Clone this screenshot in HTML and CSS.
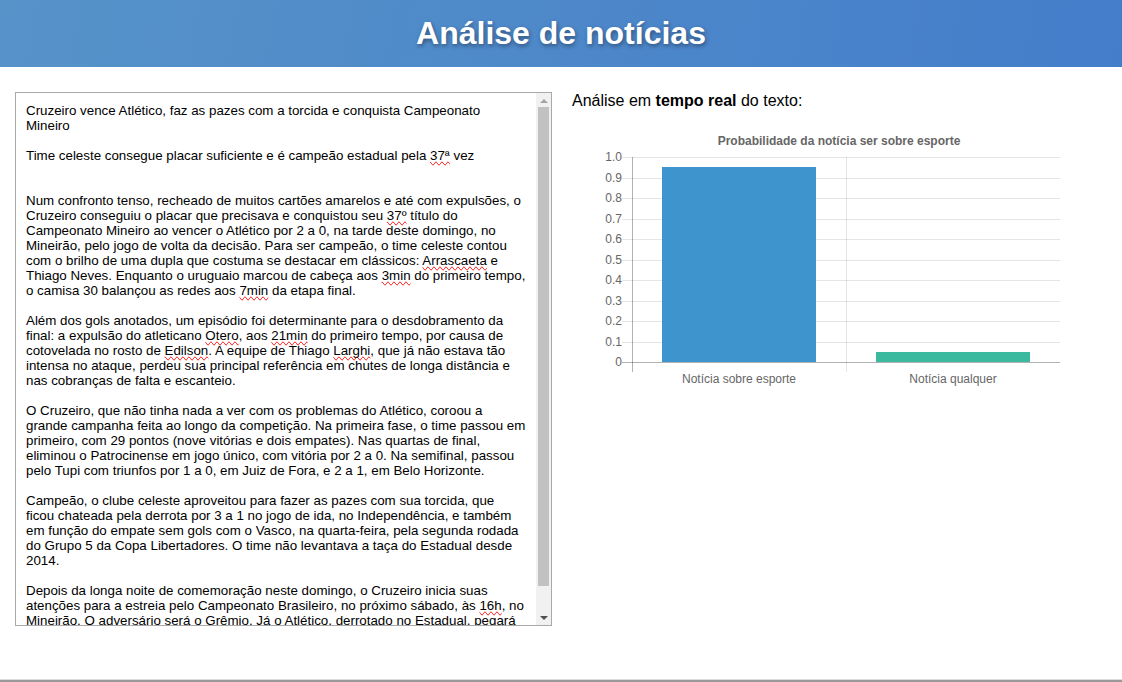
FILE: index.html
```html
<!DOCTYPE html>
<html lang="pt-BR">
<head>
<meta charset="utf-8">
<meta name="viewport" content="width=device-width, initial-scale=1">
<title>Análise de notícias</title>
<link rel="stylesheet" href="styles.css">
</head>
<body>
<header class="header"><h1 class="title">Análise de notícias</h1></header>
<main class="main">
  <div class="editor">
    <div class="field">
      <div class="marks" id="marks" aria-hidden="true"></div>
      <textarea class="text" id="news" aria-label="Texto da notícia" spellcheck="false">Cruzeiro vence Atlético, faz as pazes com a torcida e conquista Campeonato Mineiro

Time celeste consegue placar suficiente e é campeão estadual pela 37ª vez


Num confronto tenso, recheado de muitos cartões amarelos e até com expulsões, o Cruzeiro conseguiu o placar que precisava e conquistou seu 37º título do Campeonato Mineiro ao vencer o Atlético por 2 a 0, na tarde deste domingo, no Mineirão, pelo jogo de volta da decisão. Para ser campeão, o time celeste contou com o brilho de uma dupla que costuma se destacar em clássicos: Arrascaeta e Thiago Neves. Enquanto o uruguaio marcou de cabeça aos 3min do primeiro tempo, o camisa 30 balançou as redes aos 7min da etapa final.

Além dos gols anotados, um episódio foi determinante para o desdobramento da final: a expulsão do atleticano Otero, aos 21min do primeiro tempo, por causa de cotovelada no rosto de Edilson. A equipe de Thiago Larghi, que já não estava tão intensa no ataque, perdeu sua principal referência em chutes de longa distância e nas cobranças de falta e escanteio.

O Cruzeiro, que não tinha nada a ver com os problemas do Atlético, coroou a grande campanha feita ao longo da competição. Na primeira fase, o time passou em primeiro, com 29 pontos (nove vitórias e dois empates). Nas quartas de final, eliminou o Patrocinense em jogo único, com vitória por 2 a 0. Na semifinal, passou pelo Tupi com triunfos por 1 a 0, em Juiz de Fora, e 2 a 1, em Belo Horizonte.

Campeão, o clube celeste aproveitou para fazer as pazes com sua torcida, que ficou chateada pela derrota por 3 a 1 no jogo de ida, no Independência, e também em função do empate sem gols com o Vasco, na quarta-feira, pela segunda rodada do Grupo 5 da Copa Libertadores. O time não levantava a taça do Estadual desde 2014.

Depois da longa noite de comemoração neste domingo, o Cruzeiro inicia suas atenções para a estreia pelo Campeonato Brasileiro, no próximo sábado, às 16h, no Mineirão. O adversário será o Grêmio. Já o Atlético, derrotado no Estadual, pegará</textarea>
    </div>
    <div class="scrollbar" aria-hidden="true">
      <svg class="arrow arrow-off" viewBox="0 0 15 14"><path d="M4 10h8L8 6z"/></svg>
      <div class="track"><div class="thumb"></div></div>
      <svg class="arrow" viewBox="0 0 15 14"><path d="M4 5h8L8 9z"/></svg>
    </div>
  </div>
  <section class="result">
    <p class="caption">Análise em <b>tempo real</b> do texto:</p>
    <svg class="chart" viewBox="0 0 535 267" role="img" aria-label="Probabilidade da notícia ser sobre esporte">
      <text class="chart-title" x="267" y="20">Probabilidade da notícia ser sobre esporte</text>
      <g class="grid">
        <rect x="50" y="32" width="438" height="1"/>
        <rect x="50" y="53" width="438" height="1"/>
        <rect x="50" y="73" width="438" height="1"/>
        <rect x="50" y="94" width="438" height="1"/>
        <rect x="50" y="114" width="438" height="1"/>
        <rect x="50" y="135" width="438" height="1"/>
        <rect x="50" y="155" width="438" height="1"/>
        <rect x="50" y="176" width="438" height="1"/>
        <rect x="50" y="196" width="438" height="1"/>
        <rect x="50" y="217" width="438" height="1"/>
        <rect x="274" y="32" width="1" height="215"/>
      </g>
      <rect class="bar-sport" x="90" y="42" width="154" height="195"/>
      <rect class="bar-other" x="304" y="227" width="154" height="10"/>
      <g class="axis">
        <rect x="50" y="237" width="438" height="1"/>
        <rect x="60" y="32" width="1" height="215"/>
      </g>
      <g class="ticks">
        <text x="50" y="36">1.0</text>
        <text x="50" y="57">0.9</text>
        <text x="50" y="77">0.8</text>
        <text x="50" y="98">0.7</text>
        <text x="50" y="118">0.6</text>
        <text x="50" y="139">0.5</text>
        <text x="50" y="159">0.4</text>
        <text x="50" y="180">0.3</text>
        <text x="50" y="200">0.2</text>
        <text x="50" y="221">0.1</text>
        <text x="50" y="241">0</text>
      </g>
      <g class="labels">
        <text x="167" y="258">Notícia sobre esporte</text>
        <text x="381" y="258">Notícia qualquer</text>
      </g>
    </svg>
  </section>
</main>
<footer class="footer"></footer>
<script src="app.js"></script>
</body>
</html>
```
FILE: styles.css
```css
* { box-sizing: border-box; }

body {
  display: flex;
  flex-direction: column;
  min-height: 100vh;
  margin: 0;
  background: #fff;
  color: #000;
  font-family: "Liberation Sans", Arial, sans-serif;
}

.header {
  padding: 15px;
  background: linear-gradient(100deg, #5793c9, #447dca);
  text-align: center;
}

.title {
  margin: 0;
  color: #fff;
  font-size: 32px;
  line-height: 37px;
  text-shadow: 1px 2px 4px rgba(0, 0, 0, 0.4);
}

.main {
  display: grid;
  grid-template-columns: calc(50% - 9px) 1fr;
  gap: 20px;
  flex: 1;
  padding: 25px 15px 53px;
}

.editor {
  display: flex;
  border: 1px solid #a9a9a9;
}

.field {
  position: relative;
  flex: 1;
  min-width: 0;
  overflow: hidden;
}

/* The mark layer and the text box share metrics so that underlines sit under their words. */
.marks,
.text {
  position: absolute;
  inset: 0;
  width: 100%;
  height: 100%;
  margin: 0;
  padding: 10px;
  border: 0;
  background: transparent;
  font-family: inherit;
  font-size: smaller;
  line-height: 15px;
  white-space: pre-wrap;
  overflow-wrap: break-word;
}

.marks {
  overflow: hidden;
  color: transparent;
}

.text {
  color: #000;
  outline: 0;
  overflow-y: scroll;
  resize: none;
  scrollbar-width: none;
}

.misspelled { text-decoration: spelling-error; }

.scrollbar {
  display: flex;
  flex-direction: column;
  width: 15px;
  background: #f1f1f1;
}

.arrow {
  height: 14px;
  fill: #505050;
}

.arrow-off { fill: #a3a3a3; }

.track {
  flex: 1;
  padding: 0 2px;
}

.thumb {
  height: 95%;
  background: #c1c1c1;
}

.result { min-width: 0; }

.caption {
  margin: 0 0 15px;
  font-size: 16px;
  line-height: 18px;
}

.chart {
  display: block;
  width: 100%;
  font-size: 12px;
  fill: #666;
}

.chart-title {
  font-weight: bold;
  text-anchor: middle;
}

.grid { fill: rgba(0, 0, 0, 0.1); }
.axis { fill: rgba(0, 0, 0, 0.3); }
.bar-sport { fill: #3e95cd; }
.bar-other { fill: #3cba9f; }
.ticks { text-anchor: end; }
.labels { text-anchor: middle; }

.footer {
  height: 3px;
  border-top: 1px solid #dcdcdc;
  background: #999;
}
```
FILE: app.js
```js
const news = document.getElementById('news');
const marks = document.getElementById('marks');
const unknown = /(37ª|37º|Arrascaeta|3min|7min|Otero|21min|Edilson|Larghi|16h)/;

function renderMarks() {
  marks.replaceChildren(...news.value.split(unknown).map((part, i) => {
    if (i % 2 === 0) return document.createTextNode(part);
    const span = document.createElement('span');
    span.className = 'misspelled';
    span.textContent = part;
    return span;
  }));
  marks.scrollTop = news.scrollTop;
}

news.addEventListener('input', renderMarks);
news.addEventListener('scroll', () => { marks.scrollTop = news.scrollTop; });
renderMarks();
```
